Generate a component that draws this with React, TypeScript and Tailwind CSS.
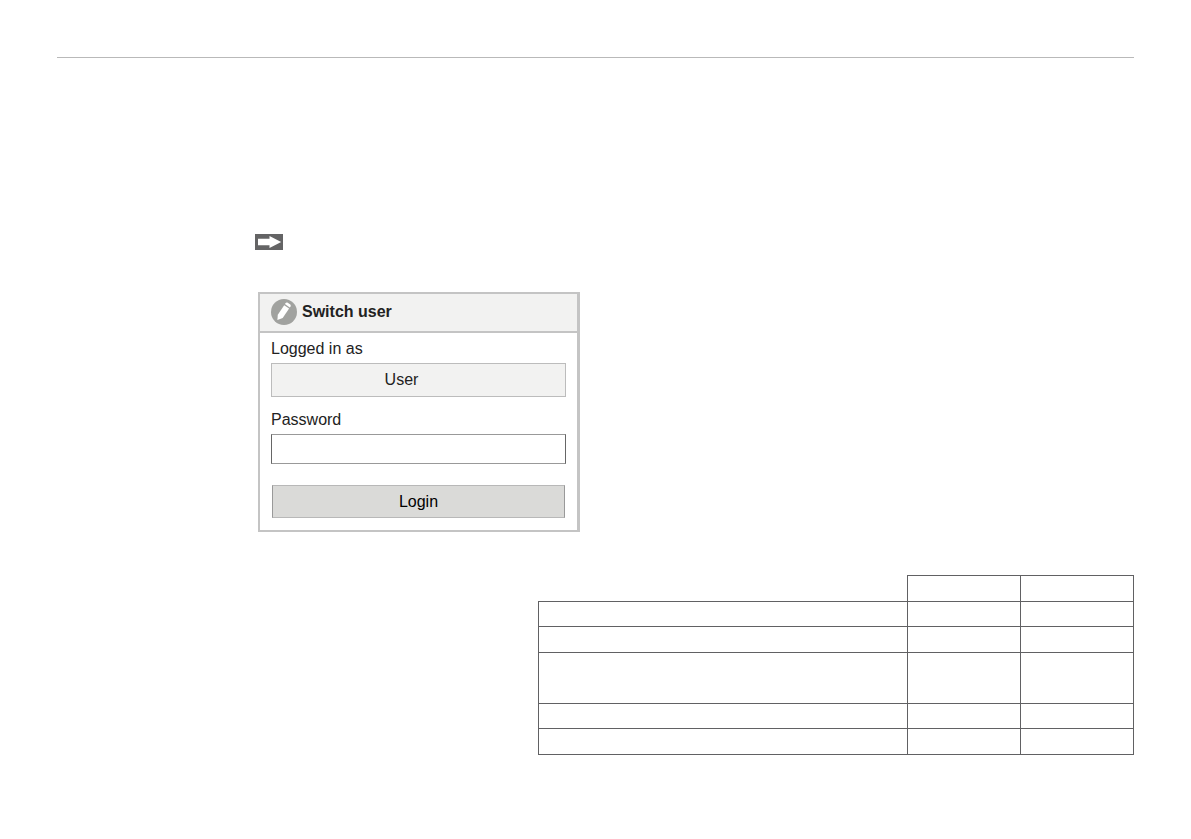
const rows = [
  { id: "r1", height: "h-[25px]" },
  { id: "r2", height: "h-[26px]" },
  { id: "r3", height: "h-[51px]" },
  { id: "r4", height: "h-[25px]" },
  { id: "r5", height: "h-[26px]" },
];

function ArrowMark() {
  return (
    <svg className="block h-4 w-7" viewBox="0 0 28 16" aria-hidden="true">
      <rect width="28" height="16" fill="#646465" />
      <path d="M3 4.800h11.500V2L26.200 8l-11.700 6v-2.800H3z" fill="#fff" />
    </svg>
  );
}

function PencilBadge() {
  return (
    <svg className="block size-[26px] shrink-0" viewBox="0 0 26 26" aria-hidden="true">
      <circle cx="13" cy="13" r="13" fill="#a1a29f" />
      <path d="M6.400 21L6.800 15.800L13.200 6.200L18.100 9.500L11.700 19z" fill="#fff" />
      <path d="M13.900 5.100L14.700 3.900Q15.400 3.100 16.300 3.600L19.300 5.600Q20.100 6.300 19.600 7.200L18.800 8.400z" fill="#fff" />
    </svg>
  );
}

function LoginPanel() {
  return (
    <form
      onSubmit={(e) => e.preventDefault()}
      className="w-[322px] border-2 border-r-3 border-[#c4c4c4] bg-white text-base text-[#222]"
    >
      <div className="flex h-[39px] items-center gap-[5px] border-b-2 border-[#c4c4c4] bg-[#f2f2f1] pb-px pl-[11px]">
        <PencilBadge />
        <h1 className="font-bold">Switch user</h1>
      </div>
      <div className="flex flex-col px-[11px] pt-1 pb-3">
        <label htmlFor="account" className="h-6">
          Logged in as
        </label>
        <select
          id="account"
          className="mt-[2px] h-[34px] w-full appearance-none rounded-none border border-[#bcbcbc] bg-[#f2f2f1] pr-[34px] text-center [text-align-last:center]"
        >
          <option>User</option>
        </select>
        <label htmlFor="password" className="mt-[11px] h-6">
          Password
        </label>
        <input
          id="password"
          type="password"
          className="mt-[2px] h-[30px] w-full rounded-none border border-x-[#666] border-y-[#999] bg-white px-2"
        />
        <button
          type="submit"
          className="mx-px mt-[21px] h-[33px] border border-x-[#999] border-y-[#b8b8b8] bg-[#dadad8] text-black"
        >
          Login
        </button>
      </div>
    </form>
  );
}

function PermissionTable() {
  return (
    <table className="w-[596px] table-fixed border-collapse">
      <colgroup>
        <col />
        <col className="w-[113px]" />
        <col className="w-[113px]" />
      </colgroup>
      <thead>
        <tr className="h-[26px]">
          <td className="p-0" />
          <td className="border border-[#616163] p-0" />
          <td className="border border-[#616163] p-0" />
        </tr>
      </thead>
      <tbody>
        {rows.map((row) => (
          <tr key={row.id} className={row.height}>
            <td className="border border-[#616163] p-0" />
            <td className="border border-[#616163] p-0" />
            <td className="border border-[#616163] p-0" />
          </tr>
        ))}
      </tbody>
    </table>
  );
}

export default function App() {
  return (
    <main className="bg-white px-[57px] pt-[57px] pb-20 font-['Liberation_Sans',Arial,sans-serif]">
      <hr className="border-t border-[#b9b9b9]" />
      <section className="pt-[176px] pl-[198px]">
        <ArrowMark />
        <div className="pt-[42px] pl-[3px]">
          <LoginPanel />
        </div>
      </section>
      <section className="flex justify-end pt-[43px]">
        <PermissionTable />
      </section>
    </main>
  );
}
